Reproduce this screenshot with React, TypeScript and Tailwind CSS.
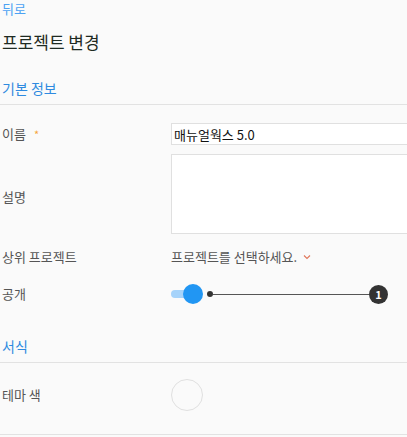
const font = { fontFamily: '"Noto Sans CJK KR", "Noto Sans", sans-serif' }

function Label({ children, required }: { children: React.ReactNode; required?: boolean }) {
  return (
    <div className="flex items-center text-[13px] leading-[18px] text-[#555]">
      {children}
      {required && <span className="ml-[8px] text-[11px] text-[#f5a43a]">*</span>}
    </div>
  )
}

function SectionHeader({ title, top }: { title: string; top: string }) {
  return (
    <div className={`${top} border-b border-[#e2e2e2] pb-[7px] pl-[2px]`}>
      <h2 className="text-[14px] leading-[18px] font-normal text-[#2e8ae0]">{title}</h2>
    </div>
  )
}

export default function App() {
  return (
    <div className="min-h-[437px] w-full overflow-hidden bg-[#fafafa]" style={font}>
      <div className="w-[520px]">
        <a className="block h-[18px] pl-[2px] text-[13px] leading-[18px] text-[#4ca2f3]">뒤로</a>
        <h1 className="mt-[12px] h-[24px] pl-[2px] text-[17px] leading-[24px] font-normal text-[#1e2a22]">
          프로젝트 변경
        </h1>

        <SectionHeader title="기본 정보" top="pt-[25px]" />

        <div className="pl-[2px]">
          <div className="mt-[18px] grid h-[22px] grid-cols-[169px_1fr] items-center">
            <Label required>이름</Label>
            <input
              defaultValue="매뉴얼웍스 5.0"
              className="h-[22px] w-[300px] border border-[#e0e0e0] bg-white px-[2px] text-[13px] text-[#111] outline-none"
              style={font}
            />
          </div>

          <div className="mt-[9px] grid h-[80px] grid-cols-[169px_1fr] items-center">
            <div className="pt-[6px]">
              <Label>설명</Label>
            </div>
            <textarea className="h-[80px] w-[300px] resize-none border border-[#e0e0e0] bg-white outline-none" />
          </div>

          <div className="mt-[13px] grid h-[20px] grid-cols-[169px_1fr] items-center">
            <Label>상위 프로젝트</Label>
            <div className="flex items-center text-[13px] leading-[18px] text-[#555]">
              프로젝트를 선택하세요.
              <svg className="ml-[6px]" width="8" height="6" viewBox="0 0 8 6">
                <path d="M1 1.5 L4 4.5 L7 1.5" fill="none" stroke="#e0765a" strokeWidth="1.1" />
              </svg>
            </div>
          </div>

          <div className="mt-[17px] grid h-[20px] grid-cols-[169px_1fr] items-center">
            <Label>공개</Label>
            <div className="flex items-center">
              <div className="relative h-[20px] w-[32px]">
                <div className="absolute top-[6px] left-0 h-[8px] w-[20px] rounded-full bg-[#a6d3fa]" />
                <div className="absolute top-0 left-[12px] h-[20px] w-[20px] rounded-full bg-[#2196f3]" />
              </div>
              <div className="ml-[4px] h-[6px] w-[6px] rounded-full bg-[#333]" />
              <div className="h-px w-[156px] bg-[#555]" />
              <div className="flex h-[19px] w-[19px] items-center justify-center rounded-full bg-[#333] text-[11px] font-bold text-white">
                1
              </div>
            </div>
          </div>
        </div>

        <SectionHeader title="서식" top="pt-[33px]" />

        <div className="border-b border-[#e2e2e2] pt-[16px] pb-[23px] pl-[2px]">
          <div className="grid h-[32px] grid-cols-[169px_1fr] items-center">
            <Label>테마 색</Label>
            <div className="h-[32px] w-[32px] rounded-full border border-[#e0e0e0]" />
          </div>
        </div>
      </div>
    </div>
  )
}
